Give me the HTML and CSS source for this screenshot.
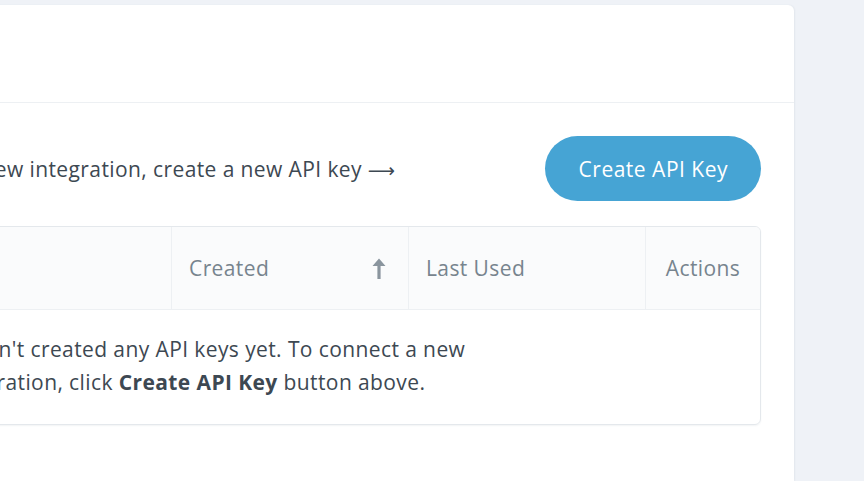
FILE: index.html
```html
<!DOCTYPE html>
<html lang="en">
<head>
    <meta charset="UTF-8">
    <meta name="viewport" content="width=device-width, initial-scale=1.0">
    <title>API Keys</title>
    <link rel="stylesheet" href="styles.css">
</head>
<body>
    <div class="page">
        <!-- Main card -->
        <div class="card">
            <div class="card-header"></div>

            <div class="card-body">
                <div class="intro">
                    <p class="intro-text">API keys grant access. To connect a new integration, create a new API key <span class="arrow">&#10230;</span></p>
                    <button class="btn-primary">Create API Key</button>
                </div>

                <!-- Keys table -->
                <div class="keys-table">
                    <div class="table-head">
                        <div class="th">Name</div>
                        <div class="th th-sort">
                            Created
                            <svg class="sort-icon" width="14" height="21" viewBox="0 0 14 21">
                                <path d="M7 0.5 L13.5 8 H8.6 V21 H5.4 V8 H0.5 Z" fill="#8a959e"/>
                            </svg>
                        </div>
                        <div class="th">Last Used</div>
                        <div class="th th-actions">Actions</div>
                    </div>
                    <div class="table-empty">
                        <p>You haven't created any API keys yet. To connect a new integration, click <strong>Create API Key</strong> button above.</p>
                    </div>
                </div>
            </div>
        </div>
        <div class="side"></div>
    </div>
</body>
</html>
```

FILE: styles.css
```css
/* Page */
body {
    margin: 0;
    background-color: #eff2f7;
    font-family: 'Open Sans', sans-serif;
    font-size: 21px;
    letter-spacing: 0.4px;
    color: #3d4852;
    overflow: hidden;
    height: 100vh;
}

.page {
    display: flex;
    padding-top: 5px;
    height: 100%;
    box-sizing: border-box;
}

/* Card */
.card {
    flex: none;
    width: 1217px;
    margin-left: -423px;
    background-color: #fff;
    border-radius: 6px 6px 0 0;
    box-shadow: 1px 0 2px rgba(40, 60, 90, 0.06);
}

.card-header {
    height: 97px;
    border-bottom: 1px solid #edf0f3;
}

.card-body {
    padding: 33px 33px 0 33px;
}

/* Intro row */
.intro {
    display: flex;
    align-items: center;
    justify-content: space-between;
    gap: 40px;
}

.intro-text {
    margin: 0 0 0 9px;
    white-space: nowrap;
}

.arrow {
    font-family: 'DejaVu Sans', sans-serif;
    font-size: 19px;
    letter-spacing: 0;
}

.btn-primary {
    flex: none;
    height: 65px;
    padding: 0 33px 0 34px;
    border: none;
    border-radius: 33px;
    background-color: #46a4d4;
    color: #fff;
    font-family: inherit;
    font-size: 21px;
    letter-spacing: 0.5px;
}

/* Table */
.keys-table {
    margin-top: 25px;
    border: 1px solid #e4e8ec;
    border-radius: 6px;
    box-shadow: 0 1px 2px rgba(40, 60, 90, 0.06);
    overflow: hidden;
}

.table-head {
    display: grid;
    grid-template-columns: 1fr 237px 237px 115px;
    height: 82px;
    background-color: #fafbfc;
    border-bottom: 1px solid #edf0f3;
}

.th {
    display: flex;
    align-items: center;
    padding: 0 22px 0 17px;
    color: #77848e;
    border-left: 1px solid #edf0f3;
}

.th:first-child {
    border-left: none;
}

.th-sort {
    justify-content: space-between;
}

.th-actions {
    justify-content: center;
    padding: 0;
}

.table-empty {
    padding: 23px 20px 25px;
    text-align: center;
}

.table-empty p {
    margin: 0 auto;
    max-width: 620px;
    line-height: 33px;
}

.table-empty strong {
    font-weight: 700;
}

/* Right strip */
.side {
    flex: 1;
}
```
